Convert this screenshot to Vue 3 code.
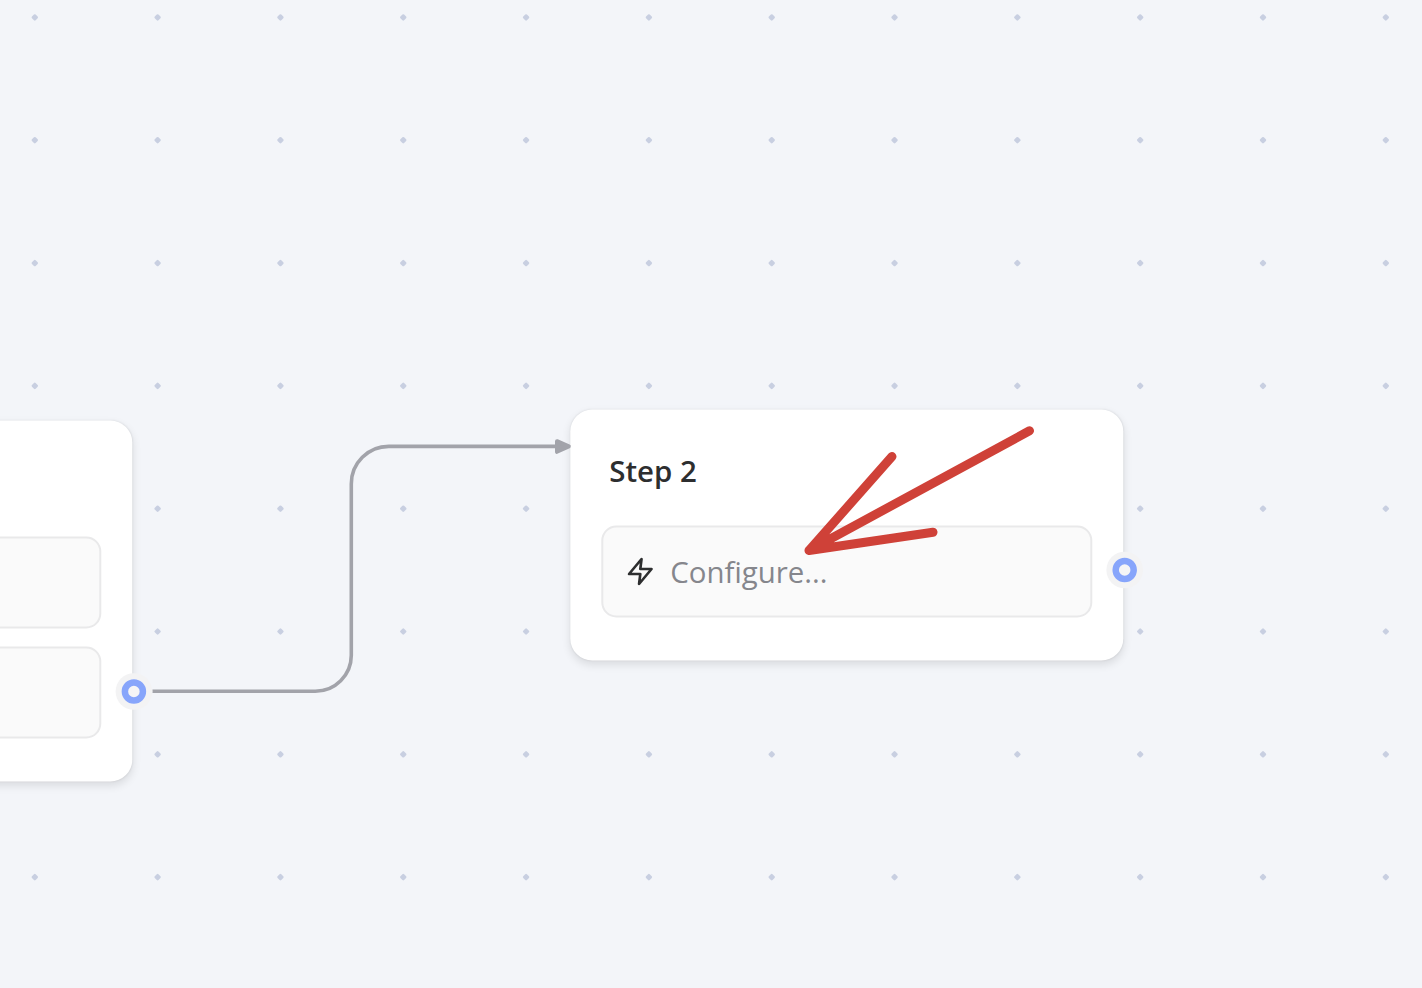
<script setup>
const pitch = 122.82
const dots = []
for (let row = 0; row < 8; row++) {
  for (let col = 0; col < 12; col++) {
    dots.push({ id: `${row}-${col}`, x: 34.8 + col * pitch, y: 17.4 + row * pitch })
  }
}
const ports = [
  { x: 133.9, y: 691.5 },
  { x: 1124.7, y: 570 },
]
</script>

<template>
  <main class="canvas">
    <svg class="layer" viewBox="0 0 1422 988" aria-hidden="true">
      <path
        v-for="d in dots"
        :key="d.id"
        class="dot"
        :d="`M${d.x - 2} ${d.y}l2 -2l2 2l-2 2z`"
      />
    </svg>

    <section class="node node-first">
      <div class="field"></div>
      <div class="field"></div>
    </section>

    <section class="node node-second">
      <h2 class="title">Step 2</h2>
      <div class="field">
        <svg class="zap" viewBox="0 0 24 24" aria-hidden="true">
          <polygon points="13 2 3 14 12 14 11 22 21 10 12 10 13 2" />
        </svg>
        <span class="label">Configure...</span>
      </div>
    </section>

    <svg class="layer" viewBox="0 0 1422 988" aria-hidden="true">
      <path class="edge" d="M152.5 691.2H315A36 36 0 0 0 351.3 655V484A37.5 37.5 0 0 1 389 446.4H558" />
      <path class="tip" d="M557 441.2L568.8 446.4L557 451.8Z" />
      <g v-for="p in ports" :key="p.x">
        <circle class="halo" :cx="p.x" :cy="p.y" r="18.3" />
        <circle class="ring" :cx="p.x" :cy="p.y" r="9" />
      </g>
      <path class="arrow" d="M1029.5 430.8L809 550.5M892 456.5L809 550.5L933 532.2" />
    </svg>
  </main>
</template>

<style>
body {
  margin: 0;
}
</style>

<style scoped>
.canvas {
  position: relative;
  width: 1422px;
  height: 988px;
  overflow: hidden;
  background: #f3f5f9;
  font-family: "Open Sans", sans-serif;
}
.layer {
  position: absolute;
  inset: 0;
  width: 1422px;
  height: 988px;
}
.dot {
  fill: #c8cfe1;
  stroke: #c8cfe1;
  stroke-width: 2.4;
  stroke-linejoin: round;
}
.node {
  position: absolute;
  box-sizing: border-box;
  display: flex;
  flex-direction: column;
  border-radius: 22px;
  background: #fff;
  box-shadow: 0 0 2px rgba(0, 0, 0, 0.06), 0 4px 8px rgba(0, 0, 0, 0.1);
  transform: translate(0.3px, 0.5px);
}
.node-first {
  left: -421px;
  top: 420px;
  width: 553px;
  height: 361px;
  padding: 116px 31px 0;
  gap: 18px;
}
.node-second {
  left: 570px;
  top: 409px;
  width: 553px;
  height: 251px;
  padding: 41px 31px 0 31px;
}
.title {
  margin: 0 0 35px 8px;
  height: 40px;
  color: #2d2e2f;
  font-size: 29.4px;
  font-weight: 600;
  line-height: 40px;
}
.field {
  box-sizing: border-box;
  display: flex;
  flex: none;
  align-items: center;
  height: 92px;
  padding-left: 22px;
  border: 2px solid #e9e9ea;
  border-radius: 15px;
  background: #fafafa;
}
.zap {
  width: 30px;
  height: 30px;
  margin-right: 15px;
  fill: none;
  stroke: #2d2e2f;
  stroke-width: 2.1;
  stroke-linejoin: round;
}
.label {
  color: #85868c;
  font-size: 29.4px;
  line-height: 40px;
}
.edge {
  fill: none;
  stroke: #a2a3aa;
  stroke-width: 3.6;
}
.tip {
  fill: #a2a3aa;
  stroke: #a2a3aa;
  stroke-width: 4;
  stroke-linejoin: round;
}
.halo {
  fill: #f3f3f4;
}
.ring {
  fill: #f5f5f6;
  stroke: #87a5fb;
  stroke-width: 6.5;
}
.arrow {
  fill: none;
  stroke: #cf4138;
  stroke-width: 9;
  stroke-linecap: round;
  stroke-linejoin: round;
}
</style>
